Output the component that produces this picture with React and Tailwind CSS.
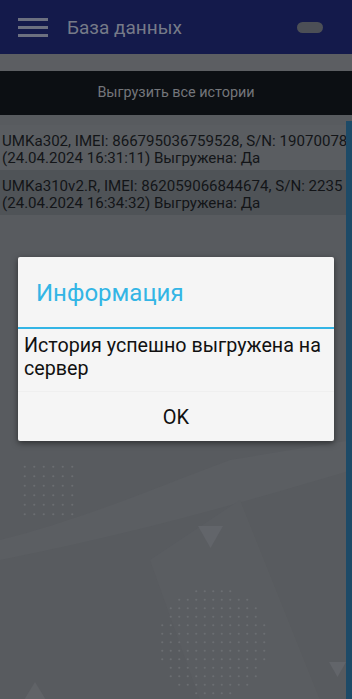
import React from 'react'

const rows = [
  {
    line1: 'UMKa302, IMEI: 866795036759528, S/N: 19070078',
    line2: '(24.04.2024 16:31:11) Выгружена: Да',
    bg: 'bg-[#5a5d61]',
  },
  {
    line1: 'UMKa310v2.R, IMEI: 862059066844674, S/N: 2235',
    line2: '(24.04.2024 16:34:32) Выгружена: Да',
    bg: 'bg-[#4f5357]',
  },
]

// dotted patch; round = keep only dots inside a circle
const Dots = ({ cols, rowsN, step = 8.5, round = false, className }) => {
  const cx = (cols - 1) / 2
  const cy = (rowsN - 1) / 2
  const rad = Math.min(cols, rowsN) / 2
  return (
    <svg className={className} width={cols * step} height={rowsN * step}>
      {Array.from({ length: rowsN }).map((_, r) =>
        Array.from({ length: cols }).map((_, c) => {
          if (round && Math.hypot(c - cx, r - cy) > rad) return null
          return <circle key={`${r}-${c}`} cx={c * step + step / 2} cy={r * step + step / 2} r="1.1" fill="#6b6e72" />
        })
      )}
    </svg>
  )
}

export default function App() {
  return (
    <div
      className="relative w-[352px] h-[699px] overflow-hidden bg-[#585b5f] flex flex-col"
      style={{ fontFamily: 'Roboto, "Noto Sans", sans-serif' }}
    >
      {/* background decoration */}
      <svg className="absolute left-0 top-[440px]" width="352" height="259">
        <path d="M0 100 C 80 80, 150 50, 230 20 L 352 0 L 352 30 C 250 60, 150 90, 0 120 Z" fill="#5b5e62" />
        <path d="M150 120 L 240 60 L 320 260 L 200 260 Z" fill="#5a5d61" />
      </svg>
      <Dots cols={6} rowsN={6} step={9.5} className="absolute left-[20px] top-[462px]" />
      <Dots cols={13} rowsN={13} round className="absolute left-[158px] top-[587px]" />
      <svg className="absolute left-[198px] top-[526px]" width="26" height="24">
        <polygon points="0,0 25,0 12.5,22" fill="#62656a" />
      </svg>
      <svg className="absolute left-[329px] top-[662px]" width="18" height="18">
        <polygon points="0,0 17,0 8.5,15" fill="#62656a" />
      </svg>
      <svg className="absolute left-[24px] top-[682px]" width="22" height="18">
        <polygon points="11,0 22,18 0,18" fill="#606367" />
      </svg>

      {/* App bar */}
      <div className="relative h-[54px] bg-[#141a4b] flex items-center pl-[18px] pr-[29px] shrink-0">
        <div className="flex flex-col gap-[5px] w-[30px]">
          <span className="h-[3px] bg-[#6c7080]" />
          <span className="h-[3px] bg-[#6c7080]" />
          <span className="h-[3px] bg-[#6c7080]" />
        </div>
        <div className="ml-[19px] text-[19px] text-[#767a88] leading-none">База данных</div>
        <div className="ml-auto w-[26px] h-[11px] rounded-full bg-[#4c4f56]" />
      </div>

      <div className="relative h-[17px] bg-[#5c5e62] shrink-0" />

      <div className="relative h-[44px] bg-[#0c0f13] flex items-center justify-center shrink-0">
        <span className="text-[14.4px] text-[#74767b]">Выгрузить все истории</span>
      </div>

      {/* list */}
      <div className="relative flex-1 pt-[10px]">
        <div className="absolute right-0 top-[6px] bottom-0 w-[6px] bg-[#1d4a67]" />
        {rows.map((r, i) => (
          <div key={i} className={`${r.bg} pl-[2px] pr-[6px] pt-[8px] pb-[3px]`}>
            <div className="whitespace-nowrap overflow-hidden text-[15.1px] leading-[17px] text-[#131518]">{r.line1}</div>
            <div className="whitespace-nowrap overflow-hidden text-[15.1px] leading-[17px] text-[#131518]">{r.line2}</div>
          </div>
        ))}
      </div>

      {/* dialog */}
      <div className="absolute left-[18px] top-[257px] w-[316px] bg-[#f5f5f5] rounded-[2px] shadow-[0_2px_6px_rgba(0,0,0,0.5)]">
        <div className="h-[70px] flex items-center pl-[18px] pt-[2px]">
          <span className="text-[24px] text-[#33b5e5]">Информация</span>
        </div>
        <div className="h-[2px] bg-[#33b5e5]" />
        <div className="px-[6px] pt-[5px] pb-[11px] text-[19.7px] leading-[23px] text-[#111111]">
          История успешно выгружена на сервер
        </div>
        <div className="h-[50px] border-t border-[#efefef] flex items-center justify-center">
          <span className="text-[20px] text-[#111111]">OK</span>
        </div>
      </div>
    </div>
  )
}
